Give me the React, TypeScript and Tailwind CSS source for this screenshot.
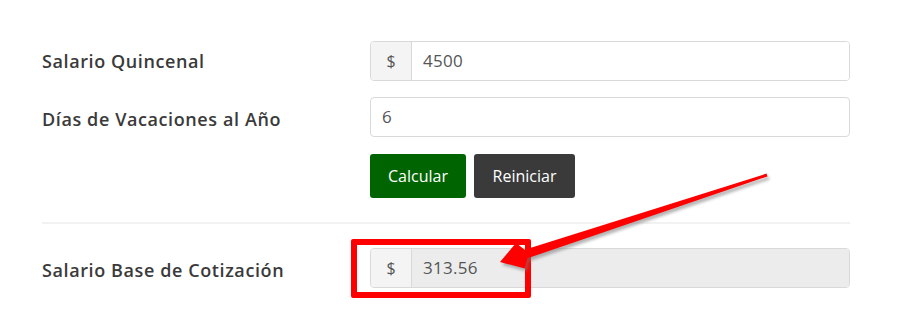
import React from "react";

const font = { fontFamily: '"Open Sans", "DejaVu Sans", sans-serif' };

function Row({ label, children, labelClass = "" }: { label: string; children: React.ReactNode; labelClass?: string }) {
  return (
    <div className="flex items-center">
      <div className={"w-[328px] shrink-0 text-[18px] tracking-[0.6px] font-semibold text-[#3a3a3a] " + labelClass}>{label}</div>
      <div className="flex-1">{children}</div>
    </div>
  );
}

export default function App() {
  return (
    <div className="relative w-[912px] h-[320px] bg-white overflow-hidden" style={font}>
      <div className="pl-[42px] pr-[62px] pt-[41px]">
        <Row label="Salario Quincenal">
          <div className="flex h-[40px] rounded-[4px] border border-[#d9d9d9] overflow-hidden">
            <div className="w-[41px] shrink-0 flex items-center justify-center bg-[#f4f4f4] border-r border-[#d9d9d9] text-[16px] text-[#555]">$</div>
            <div className="flex-1 flex items-center pl-[11px] text-[17px] tracking-[0.3px] text-[#555] bg-white">4500</div>
          </div>
        </Row>
        <div className="h-[16px]" />
        <Row label="Días de Vacaciones al Año" labelClass="pt-[4px]">
          <div className="flex h-[40px] items-center rounded-[4px] border border-[#d9d9d9] pl-[11px] text-[17px] text-[#555] bg-white">6</div>
        </Row>
        <div className="flex pl-[328px] pt-[17px] gap-[8px]">
          <button className="h-[44px] w-[96px] rounded-[3px] bg-[#006400] text-white text-[16px]">Calcular</button>
          <button className="h-[44px] w-[101px] rounded-[3px] bg-[#3a3a3a] text-white text-[16px]">Reiniciar</button>
        </div>
        <div className="mt-[24px] h-[2px] bg-[#f2f2f2]" />
        <div className="h-[24px]" />
        <Row label="Salario Base de Cotización" labelClass="pt-[5px]">
          <div className="flex h-[40px] rounded-[4px] border border-[#d9d9d9] overflow-hidden">
            <div className="w-[41px] shrink-0 flex items-center justify-center bg-[#f4f4f4] border-r border-[#d9d9d9] text-[16px] text-[#555]">$</div>
            <div className="flex-1 flex items-center pl-[11px] text-[17px] tracking-[0.3px] text-[#555] bg-[#ececec]">313.56</div>
          </div>
        </Row>
      </div>

      {/* red highlight box */}
      <div className="absolute left-[351px] top-[239px] w-[180px] h-[59px] border-[6px] border-[#ff0000] rounded-[2px]" />

      {/* arrow */}
      <svg className="absolute left-0 top-0" width="912" height="320" viewBox="0 0 912 320">
        <defs>
          <filter id="sh" x="-10%" y="-10%" width="120%" height="140%">
            <feGaussianBlur stdDeviation="1.5" />
          </filter>
        </defs>
        <polygon
          transform="translate(2,3)"
          fill="#777"
          opacity="0.55"
          filter="url(#sh)"
          points="766.5,173.6 524.6,249.7 516,243 500,262 524.7,268.5 527.4,258.3 767.5,176.4"
        />
        <polygon
          fill="#ff0000"
          points="766.5,173.6 524.6,249.7 516,243 500,262 524.7,268.5 527.4,258.3 767.5,176.4"
        />
      </svg>
    </div>
  );
}
